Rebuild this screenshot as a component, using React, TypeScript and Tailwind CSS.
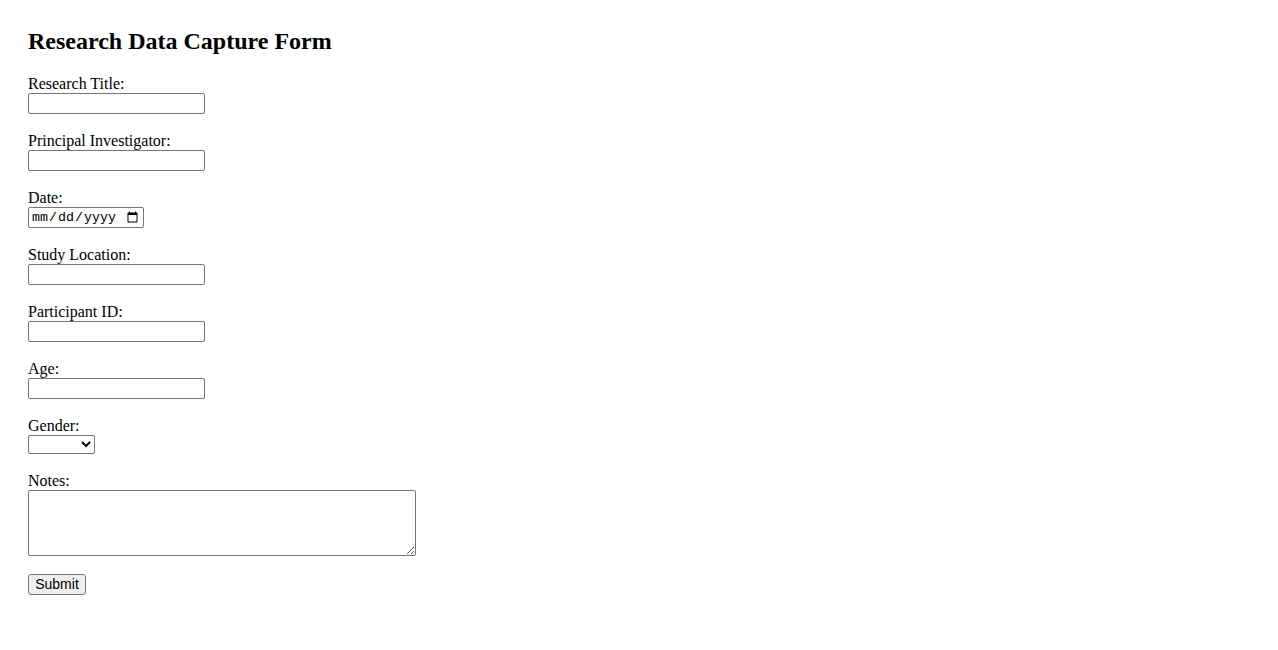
import React from 'react';

const fields = [
  { id: 'title', label: 'Research Title:' },
  { id: 'pi', label: 'Principal Investigator:' },
];

const fields2 = [
  { id: 'location', label: 'Study Location:' },
  { id: 'participant', label: 'Participant ID:' },
  { id: 'age', label: 'Age:' },
];

const inputCls =
  "block w-[177px] h-[21px] border border-[#767676] rounded-[2px] bg-white px-[2px] text-[13.33px] font-['Liberation_Sans',Arial,sans-serif] text-black";

const labelCls = "block pt-[1px] leading-[18px] text-[16px]";

export default function App() {
  return (
    <div className="min-h-screen bg-white text-black font-['Liberation_Serif','Times_New_Roman',serif] pl-[28px] pt-[28px]">
      <h2 className="text-[24px] font-bold leading-[27px] mb-[19px]">Research Data Capture Form</h2>
      <form onSubmit={e => e.preventDefault()}>
        {fields.map(f => (
          <div key={f.id} className="mb-[17px]">
            <label htmlFor={f.id} className={labelCls}>{f.label}</label>
            <input id={f.id} type="text" className={inputCls} />
          </div>
        ))}

        <div className="mb-[17px]">
          <label htmlFor="date" className={labelCls}>Date:</label>
          <input
            id="date"
            type="date"
            className="block w-[116px] h-[21px] border border-[#767676] rounded-[2px] bg-white px-[2px] text-[13.33px] font-['Liberation_Mono',monospace] text-black"
          />
        </div>

        {fields2.map(f => (
          <div key={f.id} className="mb-[17px]">
            <label htmlFor={f.id} className={labelCls}>{f.label}</label>
            <input id={f.id} type="text" className={inputCls} />
          </div>
        ))}

        <div className="mb-[17px]">
          <label htmlFor="gender" className={labelCls}>Gender:</label>
          <select
            id="gender"
            className="block w-[67px] h-[19px] border border-[#767676] rounded-[2px] bg-white text-[13.33px] font-['Liberation_Sans',Arial,sans-serif] text-black"
          >
            <option value=""></option>
            <option value="male">Male</option>
            <option value="female">Female</option>
            <option value="other">Other</option>
          </select>
        </div>

        <div className="mb-[18px]">
          <label htmlFor="notes" className={labelCls}>Notes:</label>
          <textarea
            id="notes"
            className="block w-[388px] h-[66px] border border-[#767676] rounded-[2px] bg-white px-[2px] text-[13.33px] font-['Liberation_Mono',monospace] resize"
          />
        </div>

        <button
          type="submit"
          className="block w-[58px] h-[21px] border border-[#767676] rounded-[3px] bg-[#efefef] text-[14px] leading-[17px] font-['Liberation_Sans',Arial,sans-serif] text-black"
        >
          Submit
        </button>
      </form>
    </div>
  );
}
